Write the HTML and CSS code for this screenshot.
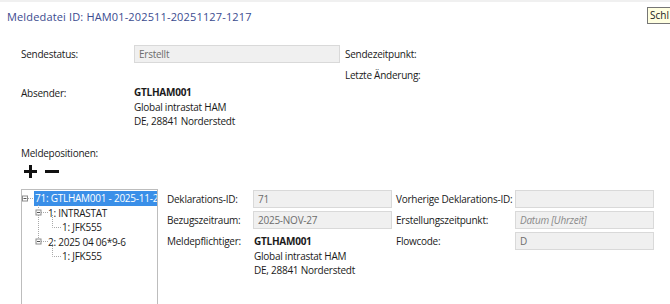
FILE: index.html
```html
<!DOCTYPE html>
<html lang="de">

<head>
    <meta charset="UTF-8">
    <title>Meldedatei</title>
    <link rel="stylesheet" href="styles.css">
</head>

<body>

    <div class="title">Meldedatei ID: HAM01-202511-20251127-1217</div>
    <div class="tip">Schl</div>

    <div class="head">
        <span class="lbl">Sendestatus:</span>
        <div class="field">Erstellt</div>
        <span class="lbl">Sendezeitpunkt:</span>

        <span></span>
        <span></span>
        <span class="lbl">Letzte Änderung:</span>

        <span class="lbl">Absender:</span>
        <div class="addr">
            <b>GTLHAM001</b><br>
            Global intrastat HAM<br>
            DE, 28841 Norderstedt
        </div>
    </div>

    <div class="section-lbl">Meldepositionen:</div>
    <div class="tools">
        <svg width="13" height="13" viewBox="0 0 13 13"><rect x="0" y="5" width="13" height="3" fill="#111"/><rect x="5" y="0" width="3" height="13" fill="#111"/></svg>
        <svg width="14" height="13" viewBox="0 0 14 13"><rect x="0" y="5" width="14" height="3" fill="#111"/></svg>
    </div>

    <div class="lower">
        <div class="tree">
            <svg class="lines" width="60" height="80" viewBox="0 0 60 80">
                <g fill="none" stroke="#a8a8a8" stroke-dasharray="1 1">
                    <path d="M6 8.5H12" />
                    <path d="M16.5 15V19M16.5 25V48" />
                    <path d="M19 22.5H26M19 51.5H26" />
                    <path d="M30.5 25V37.5H40M30.5 54V66.5H40" />
                </g>
                <g fill="#fff" stroke="#8c8c8c">
                    <rect x="0.5" y="6" width="5" height="5" />
                    <rect x="14" y="20" width="5" height="5" />
                    <rect x="14" y="49" width="5" height="5" />
                </g>
                <g stroke="#555">
                    <path d="M1.5 8.5H4.5M15 22.5H18M15 51.5H18" />
                </g>
            </svg>
            <div class="node lvl0"><span class="sel">71: GTLHAM001 - 2025-11-27</span></div>
            <div class="node lvl1">1: INTRASTAT</div>
            <div class="node lvl2">1: JFK555</div>
            <div class="node lvl1">2: 2025 04 06*9-6</div>
            <div class="node lvl2">1: JFK555</div>
        </div>

        <div class="detail">
            <span class="lbl">Deklarations-ID:</span>
            <div class="field">71</div>
            <span class="lbl col2">Vorherige Deklarations-ID:</span>
            <div class="field"></div>

            <span class="lbl">Bezugszeitraum:</span>
            <div class="field">2025-NOV-27</div>
            <span class="lbl col2">Erstellungszeitpunkt:</span>
            <div class="field hint">Datum [Uhrzeit]</div>

            <span class="lbl">Meldepflichtiger:</span>
            <div class="addr shift">
                <b>GTLHAM001</b><br>
                Global intrastat HAM<br>
                DE, 28841 Norderstedt
            </div>
            <span class="lbl col2">Flowcode:</span>
            <div class="field">D</div>
        </div>
    </div>

</body>

</html>
```

FILE: styles.css
```css
body {
    font-family: "Open Sans", "Noto Sans", sans-serif;
    font-size: 10px;
    letter-spacing: -0.25px;
    color: #1a1a1a;
    margin: 0;
    border-top: 2px solid #f0f0f0;
    position: relative;
    overflow: hidden;
    height: 302px;
}

.title {
    color: #3b4b8f;
    font-size: 11px;
    letter-spacing: 0.15px;
    line-height: 16px;
    padding: 7px 0 0 7px;
}

.tip {
    position: absolute;
    left: 647px;
    top: 5px;
    background-color: #ffffe1;
    border: 1px solid #767676;
    padding: 0 2px;
    line-height: 15px;
    white-space: nowrap;
    letter-spacing: 0;
}

.head {
    display: grid;
    grid-template-columns: 113px 211px 1fr;
    grid-template-rows: 21px 18px auto;
    margin: 20px 0 0 21px;
    align-items: start;
}

.lbl {
    line-height: 18px;
    white-space: nowrap;
}

.field {
    height: 16px;
    line-height: 16px;
    background-color: #f0f0f0;
    border: 1px solid #d9d9d9;
    color: #6d6d6d;
    padding-left: 4px;
    white-space: nowrap;
}

.head .field {
    width: 200px;
}

.field.hint {
    font-style: italic;
    color: #8a8a8a;
}

.addr {
    line-height: 14.5px;
    padding-top: 1px;
}

.addr b {
    font-weight: 700;
}

.section-lbl {
    margin: 17px 0 0 21px;
    line-height: 14.5px;
}

.tools {
    display: flex;
    gap: 8px;
    align-items: center;
    margin: 5px 0 0 24px;
    height: 13px;
}

.lower {
    display: flex;
    margin: 11px 0 0 21px;
}

.tree {
    position: relative;
    width: 135px;
    height: 130px;
    border: 1px solid #bdbdbd;
    padding-top: 1px;
    overflow: hidden;
    white-space: nowrap;
}

.tree .lines {
    position: absolute;
    left: 0;
    top: 0;
}

.node {
    line-height: 14.5px;
    height: 14.5px;
}

.lvl0 {
    padding-left: 12px;
}

.lvl1 {
    padding-left: 26px;
}

.lvl2 {
    padding-left: 40px;
}

.sel {
    display: inline-block;
    background-color: #3a8fe8;
    color: #fff;
    padding: 0 1px;
}

.detail {
    display: grid;
    grid-template-columns: 86px 138px 124px 138px;
    grid-template-rows: 18px 18px auto;
    row-gap: 3px;
    margin: 1px 0 0 9px;
    align-items: start;
}

.detail .field {
    width: 133px;
}

.col2 {
    padding-left: 5px;
}

.shift {
    padding: 2px 0 0 1px;
}
```
